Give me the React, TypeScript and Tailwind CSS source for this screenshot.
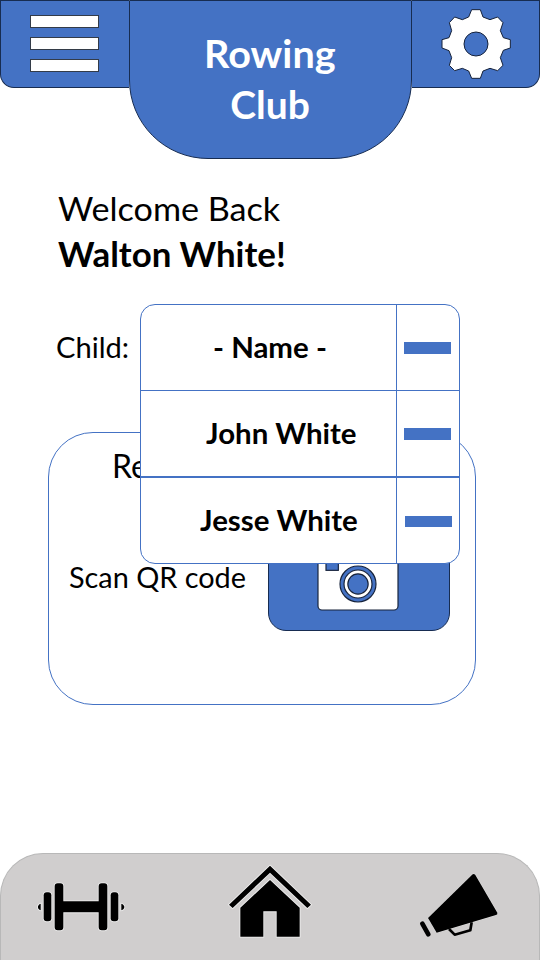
import React from "react";

function MenuIcon() {
  return (
    <div className="flex flex-col gap-[9px]">
      {[0, 1, 2].map((i) => (
        <div key={i} className="h-[13px] w-[69px] border border-[#333b48] bg-white" />
      ))}
    </div>
  );
}

function GearIcon() {
  return (
    <svg className="block h-[72px] w-[72px]" viewBox="180 24 216 216">
      <path
        d="M275 29H301L309 51L330 59L353 51L369 68L361 92L370 113L391 119V144L370 151L361 173L369 196L353 212L330 205L309 213L301 235H275L266 213L247 205L224 212L208 196L215 173L207 152L186 144V119L207 113L215 92L208 68L224 51L247 59L266 51Z"
        fill="#fff"
        stroke="#16223a"
        strokeWidth="3"
      />
      <circle cx="288" cy="132" r="36" fill="#4472c4" stroke="#16223a" strokeWidth="3" />
    </svg>
  );
}

function CameraIcon() {
  return (
    <svg className="block h-[66px] w-[84px]" viewBox="198 138 252 198">
      <rect x="204" y="146" width="240" height="184" rx="12" fill="#fff" stroke="#16223a" strokeWidth="3.5" />
      <rect x="228" y="180" width="37" height="31" fill="#4472c4" stroke="#16223a" strokeWidth="3.5" />
      <g stroke="#16223a" strokeWidth="3.5">
        <circle cx="324" cy="252" r="54" fill="#4472c4" />
        <circle cx="324" cy="252" r="42" fill="#fff" />
        <circle cx="324" cy="252" r="30.5" fill="#4472c4" />
      </g>
    </svg>
  );
}

function DumbbellIcon() {
  return (
    <svg className="block h-[52px] w-[90px]" viewBox="108 123 270 156">
      <g fill="#000" stroke="#f0f0f0" strokeWidth="5" paintOrder="stroke">
        <path d="M122 191C111 195 111 207 122 211Z" />
        <path d="M364 191C376 195 376 207 364 211Z" />
        <rect x="131" y="157" width="23" height="87" rx="9" />
        <rect x="332" y="157" width="23" height="87" rx="9" />
        <path d="M164 139Q164 130 173 130H181Q190 130 190 139V184H296V139Q296 130 305 130H313Q322 130 322 139V262Q322 271 313 271H305Q296 271 296 262V217H190V262Q190 271 181 271H173Q164 271 164 262Z" />
      </g>
    </svg>
  );
}

function HomeIcon() {
  return (
    <svg className="block h-[76px] w-[86px]" viewBox="141 72 258 228">
      <g fill="#000" stroke="#f0f0f0" strokeWidth="5" paintOrder="stroke">
        <path d="M270 77L393 194L382 204L270 98L158 204L147 194Z" />
        <path d="M270 120L359 203V290H290V214H250V290H181V203Z" />
      </g>
    </svg>
  );
}

function MegaphoneIcon() {
  return (
    <svg className="block h-[66px] w-[80px]" viewBox="177 96 240 198">
      <g fill="#000" stroke="#e8e8e8" strokeWidth="3" paintOrder="stroke">
        <path d="M338 103Q342 100 346 105L412 218Q414 223 408 225L230 278L204 234Z" />
      </g>
      <path d="M187 251L205 283" fill="none" stroke="#000" strokeWidth="14" strokeLinecap="round" />
      <path d="M267 267L284 284L331 271L335 247" fill="none" stroke="#000" strokeWidth="8" strokeLinejoin="round" />
    </svg>
  );
}

const children = [
  { name: "- Name -", text: "ml-[72px]", bar: "ml-[7px] mb-[-1px] h-3", line: "border-b" },
  { name: "John White", text: "ml-[65px]", bar: "ml-[7px] mb-[-1px] h-3", line: "border-b-2" },
  { name: "Jesse White", text: "ml-[59px]", bar: "ml-2 mb-[-2px] h-[11px]", line: "" },
];

function ChildSelect() {
  return (
    <div className="absolute left-[140px] top-0 z-10 h-[260px] w-[320px] overflow-hidden rounded-[15px] border border-[#4472c4] bg-white">
      {children.map((c) => (
        <div key={c.name} className={"flex box-content h-[85px] border-[#4472c4] " + c.line}>
          <div className="flex w-[255px] items-start">
            <span className={"origin-left scale-x-[1.015] whitespace-nowrap text-[29px] font-bold leading-[83px] " + c.text}>{c.name}</span>
          </div>
          <div className="flex flex-1 items-center border-l border-[#4472c4]">
            <div className={"w-[47px] bg-[#4472c4] " + c.bar} />
          </div>
        </div>
      ))}
    </div>
  );
}

export default function App() {
  return (
    <div className="flex h-[960px] w-[540px] flex-col overflow-hidden bg-white font-['Lato','Open_Sans',sans-serif] text-black">
      <header className="flex h-[159px] items-start">
        <div className="h-[88px] w-[129px] rounded-bl-[14px] border border-r-0 border-[#172c51] bg-[#4472c4] pl-[29px] pt-[14px]">
          <MenuIcon />
        </div>
        <div className="flex h-[159px] w-[283px] flex-col items-center rounded-b-[79px] border border-[#172c51] bg-[#4472c4] pt-[27px] pr-px text-[39px] font-bold leading-[51px] text-white">
          <span className="scale-x-[1.015]">Rowing</span>
          <span>Club</span>
        </div>
        <div className="h-[88px] w-[128px] rounded-br-[14px] border border-l-0 border-[#172c51] bg-[#4472c4] pl-[28px] pt-[7px]">
          <GearIcon />
        </div>
      </header>

      <section className="flex h-[145px] flex-col items-start pl-[58px] pt-[27px] text-[33px] leading-[45px]">
        <span className="origin-left scale-x-[1.035] whitespace-nowrap">Welcome Back</span>
        <span className="origin-left scale-x-[1.025] whitespace-nowrap text-[34px] font-bold leading-[46px]">Walton White!</span>
      </section>

      <section className="relative flex h-[549px] flex-col">
        <ChildSelect />
        <div className="flex h-[128px] pl-[56px]">
          <span className="h-[86px] origin-left scale-x-[1.04] whitespace-nowrap text-[28px] leading-[87px]">Child:</span>
        </div>
        <div className="ml-[48px] flex h-[273px] w-[428px] flex-col rounded-[45px] border border-[#4472c4]">
          <div className="h-[66px] pl-[63px] pt-[11px]">
            <span className="block w-fit origin-left text-[32px] leading-[44px]">Re</span>
          </div>
          <div className="flex">
            <div className="w-[219px] pl-5 pt-[58px]">
              <span className="block w-fit origin-left scale-x-[1.03] whitespace-nowrap text-[28px] leading-[40px]">Scan QR code</span>
            </div>
            <div className="flex h-[132px] w-[182px] justify-center rounded-[18px] border border-[#172c51] bg-[#4472c4] pr-[2px] pt-[46px]">
              <CameraIcon />
            </div>
          </div>
        </div>
      </section>

      <footer className="flex h-[107px] rounded-t-[43px] border border-b-0 border-[#b8b8b8] bg-[#d0cece]">
        <div className="w-[225px] pl-[35px] pt-[27px]">
          <DumbbellIcon />
        </div>
        <div className="w-[193px] pl-[1px] pt-[10px]">
          <HomeIcon />
        </div>
        <div className="pt-[18px]">
          <MegaphoneIcon />
        </div>
      </footer>
    </div>
  );
}
